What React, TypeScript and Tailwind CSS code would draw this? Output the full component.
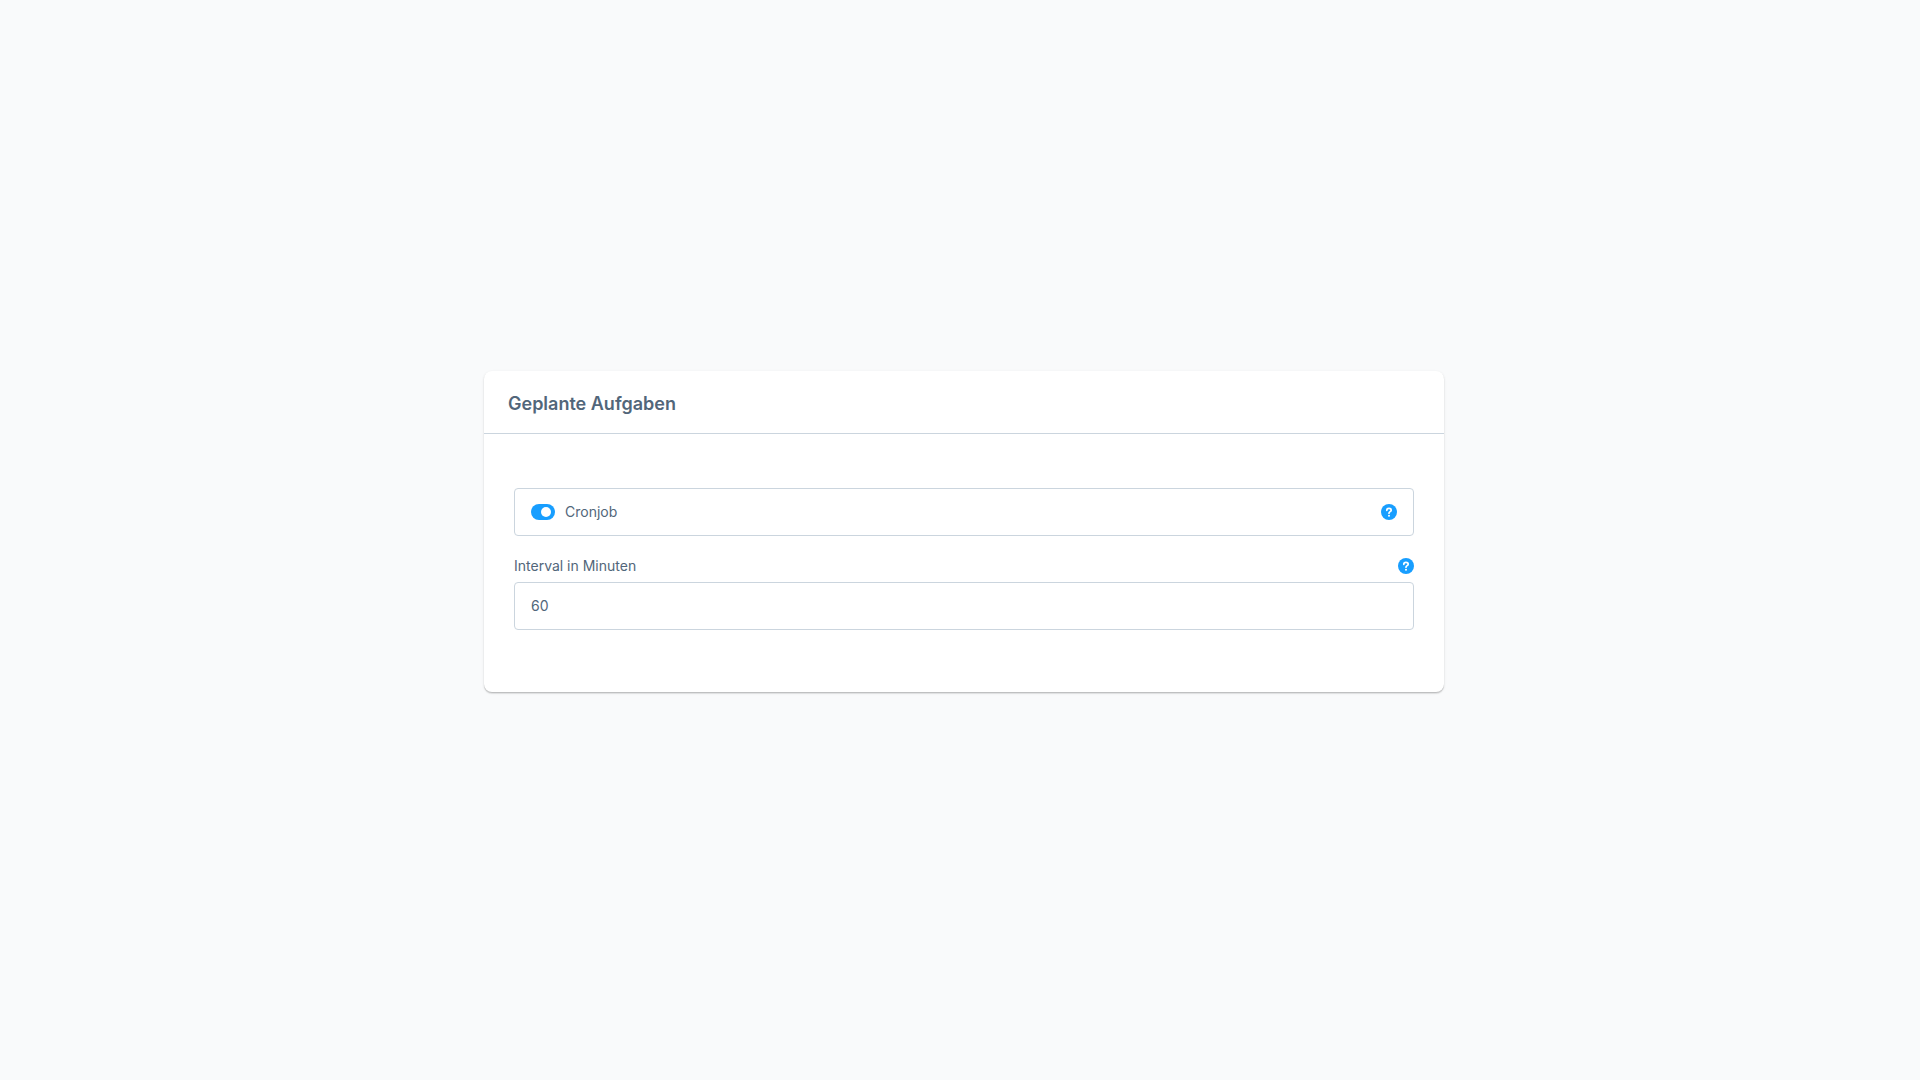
import React, { useState } from "react";

interface HelpButtonProps {
  label: string;
}

const HelpButton = ({ label }: HelpButtonProps) => (
  <button type="button" aria-label={label} className="size-4 shrink-0">
    <svg viewBox="0 0 16 16" className="size-4" aria-hidden="true">
      <circle cx="8" cy="8" r="8" fill="#189eff" />
      <path
        d="M5.8 6.3C5.8 5.1 6.7 4.4 8 4.4S10.2 5.1 10.2 6.2C10.2 7.7 8 7.6 8 9.2"
        fill="none"
        stroke="#fff"
        strokeWidth="1.7"
        strokeLinecap="round"
        strokeLinejoin="round"
      />
      <circle cx="8" cy="11.8" r="1" fill="#fff" />
    </svg>
  </button>
);

const App = () => {
  const [active, setActive] = useState<boolean>(true);
  const [interval, setInterval] = useState<string>("60");

  return (
    <main className="flex min-h-screen items-center justify-center bg-[#f9fafb] pb-[18px] pl-2 font-['Inter',sans-serif] text-sm text-[#52667a]">
      <section className="w-full max-w-[960px] rounded-lg bg-white shadow-[0_1px_1px_rgba(0,0,0,0.14),0_2px_1px_rgba(0,0,0,0.06),0_1px_3px_rgba(0,0,0,0.1)]">
        <header className="border-b border-[#cbd5de] px-6 pt-[22px] pb-[18px]">
          <h1 className="text-lg/[22px] font-semibold">Geplante Aufgaben</h1>
        </header>

        <div className="px-[30px] pt-[54px] pb-[62px]">
          <div className="mb-[22px] flex h-12 items-center justify-between rounded border border-[#cbd5de] px-4">
            <label className="flex items-center gap-[10px]">
              <input
                type="checkbox"
                role="switch"
                checked={active}
                onChange={(e) => setActive(e.target.checked)}
                className="h-4 w-6 appearance-none rounded-full bg-[#c2ccd6] p-[3px] before:block before:size-[10px] before:rounded-full before:bg-white checked:bg-[#189eff] checked:before:ml-[7px]"
              />
              Cronjob
            </label>
            <HelpButton label="Hilfe zu Cronjob" />
          </div>

          <div className="mb-2 flex h-4 items-center justify-between">
            <label htmlFor="interval">Interval in Minuten</label>
            <HelpButton label="Hilfe zum Interval" />
          </div>
          <input
            id="interval"
            type="text"
            value={interval}
            onChange={(e) => setInterval(e.target.value)}
            className="block h-12 w-full rounded border border-[#cbd5de] px-4"
          />
        </div>
      </section>
    </main>
  );
};

export default App;
